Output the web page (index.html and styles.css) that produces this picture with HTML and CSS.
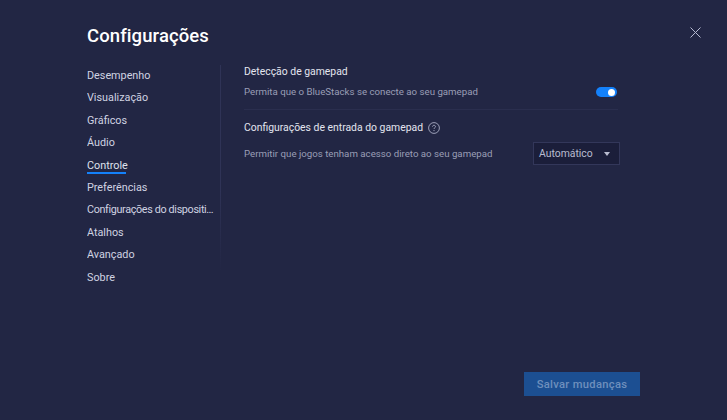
FILE: index.html
```html
<!DOCTYPE html>
<html lang="pt">
<head>
<meta charset="utf-8">
<title>Configurações</title>
<link rel="stylesheet" href="styles.css">
</head>
<body>
<div class="page">
  <button class="close" aria-label="Fechar">
    <svg width="11" height="11" viewBox="0 0 11 11"><path d="M.5.5l10 10M10.5.5l-10 10" stroke="#b4b8d0" stroke-width="1" fill="none"/></svg>
  </button>
  <h1 class="title">Configurações</h1>
  <div class="columns">
    <nav class="nav">
      <a class="nav-item">Desempenho</a>
      <a class="nav-item">Visualização</a>
      <a class="nav-item">Gráficos</a>
      <a class="nav-item">Áudio</a>
      <a class="nav-item active">Controle</a>
      <a class="nav-item">Preferências</a>
      <a class="nav-item long">Configurações do dispositivo</a>
      <a class="nav-item">Atalhos</a>
      <a class="nav-item">Avançado</a>
      <a class="nav-item">Sobre</a>
    </nav>
    <main class="content">
      <section class="section first">
        <h2 class="heading">Detecção de gamepad</h2>
        <div class="row row-toggle">
          <span class="desc">Permita que o BlueStacks se conecte ao seu gamepad</span>
          <span class="toggle"><span class="knob"></span></span>
        </div>
      </section>
      <section class="section">
        <h2 class="heading">Configurações de entrada do gamepad
          <svg class="help" width="12" height="12" viewBox="0 0 12 12"><circle cx="6" cy="6" r="5.4" fill="none" stroke="#a9adc4" stroke-width=".9"/><path d="M4.5 4.7c0-.9.7-1.4 1.5-1.4s1.5.5 1.5 1.3c0 1.2-1.5 1.1-1.5 2.3" fill="none" stroke="#a9adc4" stroke-width=".9"/><circle cx="6" cy="8.6" r=".6" fill="#a9adc4"/></svg>
        </h2>
        <div class="row row-select">
          <span class="desc">Permitir que jogos tenham acesso direto ao seu gamepad</span>
          <div class="select"><span>Automático</span><span class="arrow"></span></div>
        </div>
      </section>
    </main>
  </div>
  <div class="footer"><button class="save">Salvar mudanças</button></div>
</div>
</body>
</html>
```
FILE: styles.css
```css
* { box-sizing: border-box; }
html, body { margin: 0; height: 100%; }
body {
  background: #222644;
  font-family: Roboto, "Noto Sans", sans-serif;
  overflow: hidden;
}
.page {
  position: relative;
  width: 727px;
  height: 420px;
  padding: 25px 107px 0 87px;
  display: flex;
  flex-direction: column;
}
.close {
  position: absolute;
  top: 27px;
  left: 690px;
  width: 11px;
  height: 11px;
  padding: 0;
  border: 0;
  background: none;
  display: flex;
}
.title {
  margin: 0;
  font-size: 18.5px;
  line-height: 22px;
  font-weight: 500;
  letter-spacing: .1px;
  color: #fff;
}
.columns {
  display: flex;
  margin-top: 18px;
}
.nav {
  width: 134px;
  padding-top: 4px;
  display: flex;
  flex-direction: column;
  height: 207px;
  border-right: 1px solid;
  border-image: linear-gradient(#2f3356 60%, #222644) 1;
}
.nav-item {
  font-size: 10.8px;
  line-height: 14px;
  color: #d0d3e2;
  margin-bottom: 8.4px;
  width: 128px;
  flex: none;
  white-space: nowrap;
  overflow: hidden;
  text-overflow: ellipsis;
}
.nav-item.long { letter-spacing: -.35px; }
.nav-item.active {
  width: 39px;
  height: 15px;
  margin-bottom: 7.4px;
  overflow: visible;
  color: #dfe1ec;
  border-bottom: 2px solid #1481fb;
}
.content {
  flex: 1;
  padding-left: 23px;
  display: flex;
  flex-direction: column;
}
.section.first {
  padding-bottom: 10px;
  border-bottom: 1px solid #2a2e4e;
  margin-right: 2px;
}
.heading {
  margin: 0;
  font-size: 10.4px;
  line-height: 14px;
  font-weight: 400;
  color: #e3e5ef;
  display: flex;
  align-items: center;
  gap: 5px;
}
.section { padding-top: 0; }
.section + .section { padding-top: 11px; }
.row {
  display: flex;
  align-items: center;
  justify-content: space-between;
}
.row-toggle { margin-top: 6px; height: 14px; }
.row-select { margin-top: 7px; height: 23px; }
.desc {
  font-size: 9.7px;
  line-height: 14px;
  color: #9a9eb6;
}
.toggle {
  width: 21px;
  height: 10px;
  border-radius: 5px;
  background: #1481fb;
  display: flex;
  align-items: center;
  justify-content: flex-end;
  padding-right: 2px;
  margin-right: 1px;
}
.knob {
  width: 7px;
  height: 7px;
  border-radius: 50%;
  background: #fff;
}
.select {
  width: 87px;
  height: 23px;
  background: #1b1e3a;
  border: 1px solid #33375a;
  display: flex;
  align-items: center;
  justify-content: space-between;
  padding: 0 9px 0 5px;
  font-size: 10.4px;
  color: #b9bcd0;
}
.arrow {
  width: 0;
  height: 0;
  border-left: 3px solid transparent;
  border-right: 3px solid transparent;
  border-top: 4px solid #b9bcd0;
}
.footer {
  position: absolute;
  left: 524px;
  top: 372px;
}
.save {
  width: 116px;
  height: 24px;
  padding: 0;
  border: 0;
  background: #1c4f92;
  color: #6f8fbd;
  font-family: inherit;
  font-size: 11.2px;
  font-weight: 500;
  letter-spacing: .3px;
}
```
